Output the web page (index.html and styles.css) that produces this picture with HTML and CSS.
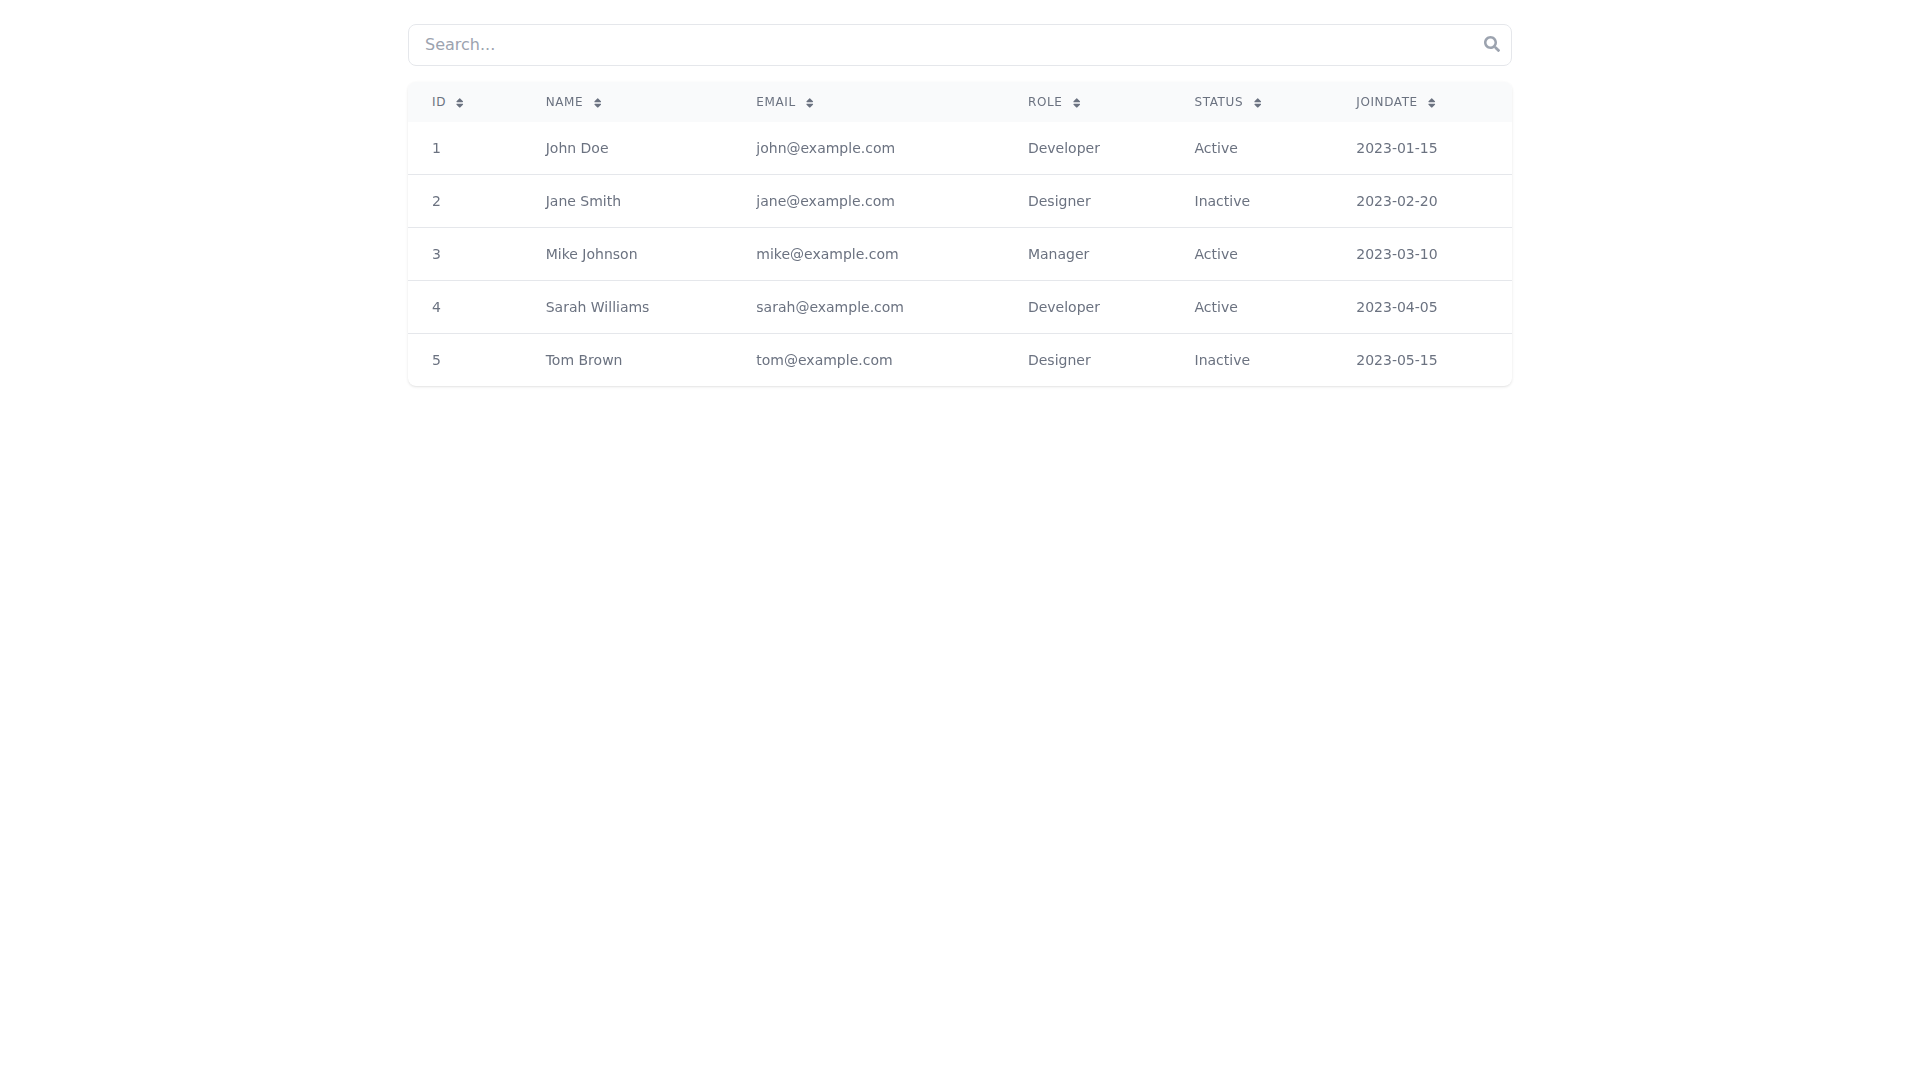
FILE: index.html
```html
<!DOCTYPE html>
<html lang="en">
<head>
<meta charset="utf-8">
<title>Users</title>
<link rel="stylesheet" href="styles.css">
</head>
<body>
<div class="container">
  <div class="search">
    <input class="search-input" type="text" placeholder="Search...">
    <svg class="search-icon" viewBox="0 0 512 512"><path d="M505 442.700L405.300 343c-4.500-4.500-10.600-7-17-7H372c27.600-35.300 44-79.700 44-128C416 93.100 322.900 0 208 0S0 93.100 0 208s93.100 208 208 208c48.300 0 92.700-16.400 128-44v16.300c0 6.400 2.500 12.500 7 17l99.700 99.700c9.400 9.400 24.600 9.400 33.900 0l28.300-28.300c9.400-9.400 9.400-24.600.1-34zM208 336c-70.700 0-128-57.200-128-128 0-70.700 57.200-128 128-128 70.700 0 128 57.200 128 128 0 70.700-57.200 128-128 128z"/></svg>
  </div>
  <div class="card">
    <table class="table">
      <thead>
        <tr>
          <th>ID <svg class="sort" viewBox="0 0 320 512"><path d="M41 288h238c21.400 0 32.100 25.900 17 41L177 448c-9.400 9.400-24.600 9.400-33.900 0L24 329c-15.100-15.100-4.400-41 17-41zm255-105L177 64c-9.400-9.400-24.600-9.400-33.900 0L24 183c-15.100 15.100-4.400 41 17 41h238c21.400 0 32.100-25.900 17-41z"/></svg></th>
          <th>Name <svg class="sort" viewBox="0 0 320 512"><path d="M41 288h238c21.400 0 32.100 25.900 17 41L177 448c-9.400 9.400-24.600 9.400-33.900 0L24 329c-15.100-15.100-4.400-41 17-41zm255-105L177 64c-9.400-9.400-24.600-9.400-33.900 0L24 183c-15.100 15.100-4.400 41 17 41h238c21.400 0 32.100-25.900 17-41z"/></svg></th>
          <th>Email <svg class="sort" viewBox="0 0 320 512"><path d="M41 288h238c21.400 0 32.100 25.900 17 41L177 448c-9.400 9.400-24.600 9.400-33.900 0L24 329c-15.100-15.100-4.400-41 17-41zm255-105L177 64c-9.400-9.400-24.600-9.400-33.900 0L24 183c-15.100 15.100-4.400 41 17 41h238c21.400 0 32.100-25.900 17-41z"/></svg></th>
          <th>Role <svg class="sort" viewBox="0 0 320 512"><path d="M41 288h238c21.400 0 32.100 25.900 17 41L177 448c-9.400 9.400-24.600 9.400-33.900 0L24 329c-15.100-15.100-4.400-41 17-41zm255-105L177 64c-9.400-9.400-24.600-9.400-33.900 0L24 183c-15.100 15.100-4.400 41 17 41h238c21.400 0 32.100-25.900 17-41z"/></svg></th>
          <th>Status <svg class="sort" viewBox="0 0 320 512"><path d="M41 288h238c21.400 0 32.100 25.900 17 41L177 448c-9.400 9.400-24.600 9.400-33.900 0L24 329c-15.100-15.100-4.400-41 17-41zm255-105L177 64c-9.400-9.400-24.600-9.400-33.900 0L24 183c-15.100 15.100-4.400 41 17 41h238c21.400 0 32.100-25.900 17-41z"/></svg></th>
          <th>Joindate <svg class="sort" viewBox="0 0 320 512"><path d="M41 288h238c21.400 0 32.100 25.900 17 41L177 448c-9.400 9.400-24.600 9.400-33.900 0L24 329c-15.100-15.100-4.400-41 17-41zm255-105L177 64c-9.400-9.400-24.600-9.400-33.900 0L24 183c-15.100 15.100-4.400 41 17 41h238c21.400 0 32.100-25.900 17-41z"/></svg></th>
        </tr>
      </thead>
      <tbody>
        <tr><td>1</td><td>John Doe</td><td>john@example.com</td><td>Developer</td><td>Active</td><td>2023-01-15</td></tr>
        <tr><td>2</td><td>Jane Smith</td><td>jane@example.com</td><td>Designer</td><td>Inactive</td><td>2023-02-20</td></tr>
        <tr><td>3</td><td>Mike Johnson</td><td>mike@example.com</td><td>Manager</td><td>Active</td><td>2023-03-10</td></tr>
        <tr><td>4</td><td>Sarah Williams</td><td>sarah@example.com</td><td>Developer</td><td>Active</td><td>2023-04-05</td></tr>
        <tr><td>5</td><td>Tom Brown</td><td>tom@example.com</td><td>Designer</td><td>Inactive</td><td>2023-05-15</td></tr>
      </tbody>
    </table>
  </div>
</div>
</body>
</html>
```
FILE: styles.css
```css
* { box-sizing: border-box; }
html, body { margin: 0; padding: 0; background: #fff; }
body { font-family: "DejaVu Sans", sans-serif; line-height: 1.5; color: #6b7280; }
.container { width: 1152px; margin: 0 auto; padding: 24px; will-change: opacity; }
.search { position: relative; margin-bottom: 16px; }
.search-input {
  display: block; width: 100%; height: 42px; padding: 8px 16px 10px;
  font: 16px/24px "DejaVu Sans", sans-serif; color: #374151;
  background: #fff; border: 1px solid #e5e7eb; border-radius: 8px; outline: none;
}
.search-input::placeholder { color: #9ca3af; opacity: 1; }
.search-icon { position: absolute; right: 12px; top: 12px; width: 16px; height: 16px; fill: #9ca3af; }
.card {
  background: #fff; border-radius: 8px; overflow: hidden;
  box-shadow: 0 1px 3px 0 rgba(0,0,0,.1), 0 1px 2px -1px rgba(0,0,0,.1);
}
.table { width: 100%; border-collapse: collapse; }
th {
  padding: 12px 24px; background: #f9fafb; text-align: left;
  font-size: 12px; line-height: 16px; font-weight: 500; color: #6b7280;
  text-transform: uppercase; letter-spacing: .05em; white-space: nowrap;
}
.sort { display: inline-block; width: 7.5px; height: 12px; margin-left: 6px; margin-right: 2px; fill: #6b7280; vertical-align: -3px; }
td { padding: 16px 24px; font-size: 14px; line-height: 20px; color: #6b7280; white-space: nowrap; }
tbody tr + tr { border-top: 1px solid #e5e7eb; }
```
